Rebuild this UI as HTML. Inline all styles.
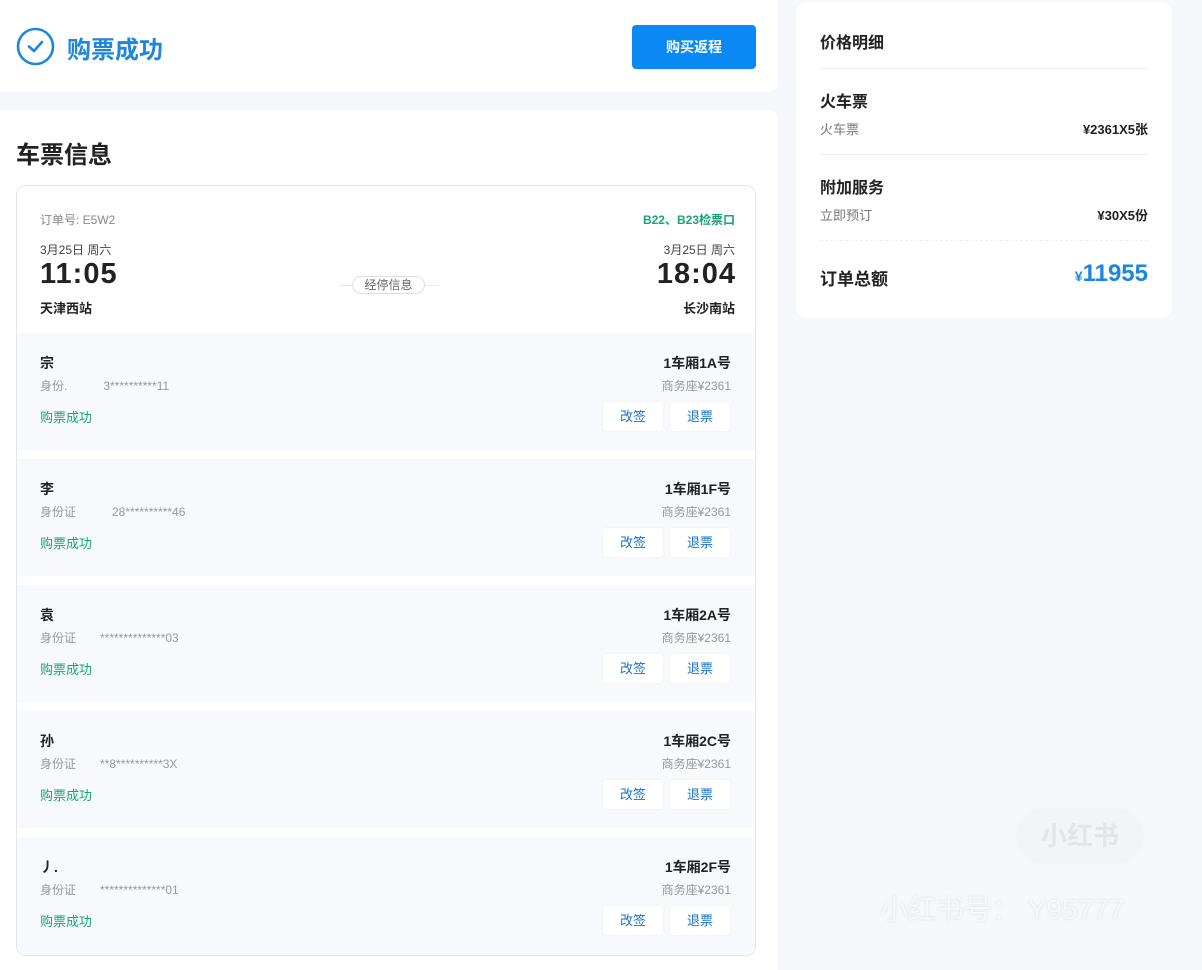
<!DOCTYPE html>
<html><head><meta charset="utf-8"><style>
*{margin:0;padding:0;box-sizing:border-box}
body{width:1202px;height:959px;background:#f5f7fb;font-family:"Liberation Sans","Noto Sans CJK SC",sans-serif;position:relative;overflow:hidden;color:#222}
.a{position:absolute;white-space:nowrap}
.card{position:absolute;background:#fff;border-radius:10px}
.row{position:absolute;left:17px;width:737px;height:117px;background:#f7f9fc}
.btn{position:absolute;top:69px;width:60px;height:29px;background:#fff;border-radius:3px;color:#1a73c9;font-size:13px;text-align:center;line-height:29px;box-shadow:0 0 2px rgba(0,0,0,.06)}
.t{font-size:29px;font-weight:bold;color:#222;letter-spacing:1px}
</style></head><body>
<div class="card" style="left:0;top:0;width:778px;height:92px;border-radius:0 0 10px 0"></div>
<svg class="a" style="left:16px;top:27px" width="40" height="40" viewBox="0 0 40 40"><circle cx="19.5" cy="19.5" r="17.5" fill="none" stroke="#1e86de" stroke-width="2.6"/><path d="M13 19.5l5 4.5 8-9" fill="none" stroke="#1e86de" stroke-width="2.6" stroke-linecap="round" stroke-linejoin="round"/></svg>
<div class="a" style="left:67px;top:30px;font-size:24px;font-weight:bold;color:#1e86de">购票成功</div>
<div class="a" style="left:632px;top:25px;width:124px;height:44px;background:#0a89f5;border-radius:4px;color:#fff;font-size:14px;font-weight:bold;text-align:center;line-height:44px">购买返程</div>

<div class="card" style="left:0;top:110px;width:778px;height:860px;border-radius:0 10px 0 0"></div>
<div class="a" style="left:16px;top:135px;font-size:24px;font-weight:bold;color:#222">车票信息</div>
<div class="a" style="left:16px;top:185px;width:740px;height:771px;border:1px solid #e2e5ea;border-radius:10px;background:#fff"></div>
<div class="a" style="left:40px;top:211px;font-size:12px;color:#888">订单号: E5W2</div>
<div class="a" style="right:467px;top:211px;font-size:12px;font-weight:bold;color:#1aa37a">B22、B23检票口</div>
<div class="a" style="left:40px;top:241px;font-size:12px;color:#444">3月25日 周六</div>
<div class="a" style="right:467px;top:241px;font-size:12px;color:#444">3月25日 周六</div>
<div class="a t" style="left:40px;top:258px">11:05</div>
<div class="a t" style="right:466px;top:258px">18:04</div>
<div class="a" style="left:340px;top:285px;width:98px;height:1px;background:#e6e8ec"></div>
<div class="a" style="left:352px;top:276px;width:73px;height:18px;border:1px solid #dde0e5;border-radius:9px;background:#fff;font-size:12px;color:#666;text-align:center;line-height:16px">经停信息</div>
<div class="a" style="left:40px;top:298px;font-size:13px;font-weight:bold;color:#222">天津西站</div>
<div class="a" style="right:467px;top:298px;font-size:13px;font-weight:bold;color:#222">长沙南站</div>

<div class="row" style="top:333px"><div class="a" style="left:23px;top:20px;font-size:14px;font-weight:bold">宗</div><div class="a" style="left:23px;top:44px;font-size:12px;color:#999">身份.　　　3**********11</div><div class="a" style="left:23px;top:74px;font-size:13px;color:#1aa37a">购票成功</div><div class="a" style="right:23px;top:20px;font-size:14px;font-weight:bold">1车厢1A号</div><div class="a" style="right:23px;top:44px;font-size:12px;color:#999">商务座¥2361</div><div class="btn" style="left:586px">改签</div><div class="btn" style="left:653px">退票</div></div>
<div class="row" style="top:459px"><div class="a" style="left:23px;top:20px;font-size:14px;font-weight:bold">李</div><div class="a" style="left:23px;top:44px;font-size:12px;color:#999">身份证　　　28**********46</div><div class="a" style="left:23px;top:74px;font-size:13px;color:#1aa37a">购票成功</div><div class="a" style="right:23px;top:20px;font-size:14px;font-weight:bold">1车厢1F号</div><div class="a" style="right:23px;top:44px;font-size:12px;color:#999">商务座¥2361</div><div class="btn" style="left:586px">改签</div><div class="btn" style="left:653px">退票</div></div>
<div class="row" style="top:585px"><div class="a" style="left:23px;top:20px;font-size:14px;font-weight:bold">袁</div><div class="a" style="left:23px;top:44px;font-size:12px;color:#999">身份证　　**************03</div><div class="a" style="left:23px;top:74px;font-size:13px;color:#1aa37a">购票成功</div><div class="a" style="right:23px;top:20px;font-size:14px;font-weight:bold">1车厢2A号</div><div class="a" style="right:23px;top:44px;font-size:12px;color:#999">商务座¥2361</div><div class="btn" style="left:586px">改签</div><div class="btn" style="left:653px">退票</div></div>
<div class="row" style="top:711px"><div class="a" style="left:23px;top:20px;font-size:14px;font-weight:bold">孙</div><div class="a" style="left:23px;top:44px;font-size:12px;color:#999">身份证　　**8**********3X</div><div class="a" style="left:23px;top:74px;font-size:13px;color:#1aa37a">购票成功</div><div class="a" style="right:23px;top:20px;font-size:14px;font-weight:bold">1车厢2C号</div><div class="a" style="right:23px;top:44px;font-size:12px;color:#999">商务座¥2361</div><div class="btn" style="left:586px">改签</div><div class="btn" style="left:653px">退票</div></div>
<div class="row" style="top:837px;height:117px;border-radius:0 0 10px 10px"><div class="a" style="left:23px;top:20px;font-size:14px;font-weight:bold">丿.</div><div class="a" style="left:23px;top:44px;font-size:12px;color:#999">身份证　　**************01</div><div class="a" style="left:23px;top:74px;font-size:13px;color:#1aa37a">购票成功</div><div class="a" style="right:23px;top:20px;font-size:14px;font-weight:bold">1车厢2F号</div><div class="a" style="right:23px;top:44px;font-size:12px;color:#999">商务座¥2361</div><div class="btn" style="left:586px">改签</div><div class="btn" style="left:653px">退票</div></div>

<div class="card" style="left:796px;top:2px;width:376px;height:316px"></div>
<div class="a" style="left:820px;top:29px;font-size:16px;font-weight:bold">价格明细</div>
<div class="a" style="left:820px;top:68px;width:328px;height:1px;background:#eceef1"></div>
<div class="a" style="left:820px;top:88px;font-size:16px;font-weight:bold">火车票</div>
<div class="a" style="left:820px;top:119px;font-size:13px;color:#777">火车票</div>
<div class="a" style="right:54px;top:119px;font-size:13px;font-weight:bold">¥2361X5张</div>
<div class="a" style="left:820px;top:154px;width:328px;height:1px;background:#eceef1"></div>
<div class="a" style="left:820px;top:174px;font-size:16px;font-weight:bold">附加服务</div>
<div class="a" style="left:820px;top:205px;font-size:13px;color:#777">立即预订</div>
<div class="a" style="right:54px;top:205px;font-size:13px;font-weight:bold">¥30X5份</div>
<div class="a" style="left:820px;top:240px;width:328px;border-top:1px dashed #eceef1"></div>
<div class="a" style="left:820px;top:265px;font-size:17px;font-weight:bold">订单总额</div>
<div class="a" style="right:54px;top:260px;font-size:24px;font-weight:bold;color:#1e86de"><span style="font-size:14px">¥</span>11955</div>

<div class="a" style="left:1016px;top:808px;width:128px;height:56px;border-radius:28px;background:#f3f4f6;color:#e4e5e8;font-size:26px;font-weight:bold;text-align:center;line-height:56px">小红书</div>
<div class="a" style="left:880px;top:888px;font-size:28px;color:#f7f8fa;text-shadow:0 0 2px #d8dbe0">小红书号： Y95777</div>
</body></html>
